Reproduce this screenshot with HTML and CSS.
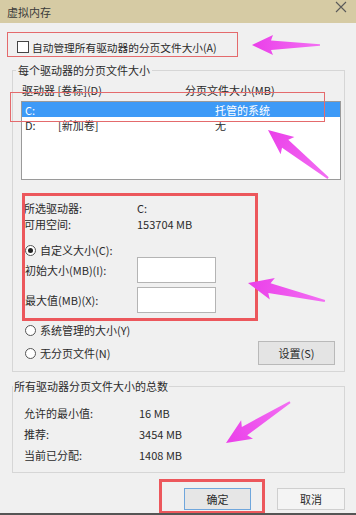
FILE: index.html
```html
<!DOCTYPE html>
<html lang="zh-CN">
<head>
    <meta charset="UTF-8">
    <meta name="viewport" content="width=device-width, initial-scale=1.0">
    <title>虚拟内存</title>
    <link rel="stylesheet" href="styles.css">
</head>
<body>
    <div class="dialog">
        <div class="titlebar">
            <span class="title">虚拟内存</span>
            <svg class="close" width="12" height="12" viewBox="0 0 12 12">
                <path d="M1 1 L11 11 M11 1 L1 11" stroke="#5a5a5a" stroke-width="1.1" fill="none"/>
            </svg>
        </div>

        <label class="check-row"><span class="checkbox"></span>自动管理所有驱动器的分页文件大小(A)</label>

        <fieldset class="group group-drives">
            <legend>每个驱动器的分页文件大小</legend>
            <div class="list-head">
                <span class="col-drive">驱动器 [卷标](D)</span>
                <span>分页文件大小(MB)</span>
            </div>
            <div class="list">
                <div class="list-row selected"><span class="c1">C:</span><span class="c2"></span><span>托管的系统</span></div>
                <div class="list-row"><span class="c1">D:</span><span class="c2">[新加卷]</span><span>无</span></div>
            </div>

            <div class="info">
                <div class="info-row"><span class="info-label">所选驱动器:</span><span>C:</span></div>
                <div class="info-row"><span class="info-label">可用空间:</span><span>153704 MB</span></div>
            </div>

            <div class="radio-row first"><span class="radio checked"></span>自定义大小(C):</div>
            <div class="field-row"><span class="field-label">初始大小(MB)(I):</span><span class="input"></span></div>
            <div class="field-row second"><span class="field-label">最大值(MB)(X):</span><span class="input"></span></div>
            <div class="radio-row third"><span class="radio"></span>系统管理的大小(Y)</div>
            <div class="radio-row last">
                <span class="radio-label"><span class="radio"></span>无分页文件(N)</span>
                <span class="btn btn-set">设置(S)</span>
            </div>
        </fieldset>

        <fieldset class="group group-total">
            <legend>所有驱动器分页文件大小的总数</legend>
            <div class="total-row first"><span class="total-label">允许的最小值:</span><span>16 MB</span></div>
            <div class="total-row"><span class="total-label">推荐:</span><span>3454 MB</span></div>
            <div class="total-row"><span class="total-label">当前已分配:</span><span>1408 MB</span></div>
        </fieldset>

        <div class="actions">
            <span class="btn btn-ok">确定</span>
            <span class="btn btn-cancel">取消</span>
        </div>
    </div>

    <!-- annotations drawn over the dialog -->
    <svg class="marks" width="356" height="515" viewBox="0 0 356 515">
        <defs>
            <linearGradient id="pink" x1="0" y1="0" x2="1" y2="0">
                <stop offset="0" stop-color="#ea3fe9"/>
                <stop offset="1" stop-color="#f36ff3"/>
            </linearGradient>
        </defs>
        <g fill="none" stroke="#e46a6c" stroke-width="1">
            <rect x="7.5" y="32.5" width="230" height="24"/>
            <rect x="10.5" y="92.5" width="314" height="29"/>
        </g>
        <g fill="none" stroke="#ec575c" stroke-width="3">
            <rect x="23.5" y="194.5" width="233" height="125"/>
            <rect x="160.5" y="480.5" width="103" height="32"/>
        </g>
        <g fill="url(#pink)">
            <polygon transform="translate(252,45)" points="0,0 21,-10 19,-4.5 68,-0.8 68,0.8 19,5 21,10"/>
            <polygon transform="translate(268,130) rotate(38.7)" points="0,0 25,-11 22,-5 77,-1 77,1 22,5 25,11"/>
            <polygon transform="translate(248,283) rotate(13.2)" points="0,0 25,-11 22,-5 79,-1 79,1 22,5 25,11"/>
            <polygon transform="translate(226,443) rotate(-32.6)" points="0,0 25,-11 22,-5 76,-1 76,1 22,5 25,11"/>
        </g>
    </svg>
</body>
</html>
```

FILE: styles.css
```css
body {
    margin: 0;
    background: #555;
    font-family: "Noto Sans CJK SC", "Liberation Sans", sans-serif;
    font-size: 11px;
    color: #2b2b2b;
    position: relative;
}
.dialog {
    background: #f0f0f0;
    height: 513px;
    display: flex;
    flex-direction: column;
}
.titlebar {
    height: 23px;
    background: #d6cba4;
    display: flex;
    align-items: center;
    justify-content: space-between;
    padding: 0 9px 0 7px;
}
.title {
    color: #3a3a3a;
    font-size: 11px;
}
.close {
    align-self: flex-start;
    margin-top: 1px;
}

.check-row {
    display: flex;
    align-items: center;
    height: 12px;
    margin: 18px 0 0 17px;
    gap: 3px;
    font-size: 10.7px;
}
.checkbox {
    width: 10px;
    height: 10px;
    border: 1px solid #444;
    background: #fff;
}

.group {
    margin: 10px 11px 0 12px;
    border: 1px solid #d6d6d6;
    min-width: 0;
}
.group legend {
    line-height: 14px;
    padding: 0 2px;
    color: #2b2b2b;
}
.group-drives {
    padding: 0 3px 6px 8px;
}
.group-drives legend {
    margin-left: -5px;
}
.list-head {
    display: flex;
    line-height: 14px;
    margin-top: 6px;
    padding-left: 1px;
}
.col-drive {
    width: 163px;
}
.list {
    margin-top: 4px;
    height: 77px;
    border: 1px solid #9a9a9a;
    background: #fff;
}
.list-row {
    display: flex;
    height: 16px;
    line-height: 16px;
    padding-left: 3px;
}
.list-row.selected {
    background: #3d9af7;
    color: #fff;
    height: 15px;
}
.c1 {
    width: 33px;
}
.c2 {
    width: 157px;
}

.info {
    margin-top: 20px;
}
.info-row {
    display: flex;
    line-height: 16px;
    padding-left: 3px;
}
.info-label {
    width: 113px;
}

.radio-row {
    display: flex;
    align-items: center;
    height: 14px;
    padding-left: 4px;
    gap: 4px;
}
.radio-row.first {
    margin-top: 11px;
}
.radio-row.third {
    margin-top: 10px;
}
.radio-row.last {
    height: 24px;
    margin-top: 4px;
    justify-content: space-between;
    padding-right: 6px;
}
.radio-label {
    display: flex;
    align-items: center;
    gap: 4px;
}
.radio {
    width: 9px;
    height: 9px;
    border: 1px solid #555;
    border-radius: 50%;
    background: #fff;
    position: relative;
}
.radio.checked::after {
    content: "";
    position: absolute;
    left: 2px;
    top: 2px;
    width: 5px;
    height: 5px;
    border-radius: 50%;
    background: #222;
}

.field-row {
    display: flex;
    align-items: center;
    height: 26px;
    padding-left: 4px;
}
.field-row.second {
    margin-top: 4px;
}
.field-label {
    width: 112px;
}
.input {
    width: 77px;
    height: 24px;
    border: 1px solid #b4b4b4;
    background: #fff;
}

.btn {
    display: flex;
    align-items: center;
    justify-content: center;
    box-sizing: border-box;
    border: 1px solid #b9b9b9;
    background: #e4e4e4;
}
.btn-set {
    width: 77px;
    height: 24px;
}

.group-total {
    margin-top: 7px;
    padding: 0 3px 6px 11px;
}
.group-total legend {
    margin-left: -11px;
    padding: 0 1px;
}
.total-row {
    display: flex;
    line-height: 21px;
}
.total-row.first {
    margin-top: 10px;
}
.total-label {
    width: 115px;
}

.actions {
    display: flex;
    justify-content: flex-end;
    gap: 26px;
    margin-top: 15px;
    padding-right: 11px;
}
.btn-ok {
    width: 67px;
    height: 22px;
    border-color: #6fa6dc;
    background: #e6e6e6;
}
.btn-cancel {
    width: 68px;
    height: 22px;
    background: #f4f4f4;
    border-color: #cfcfcf;
}

.marks {
    position: absolute;
    top: 0;
    left: 0;
    pointer-events: none;
}
```
